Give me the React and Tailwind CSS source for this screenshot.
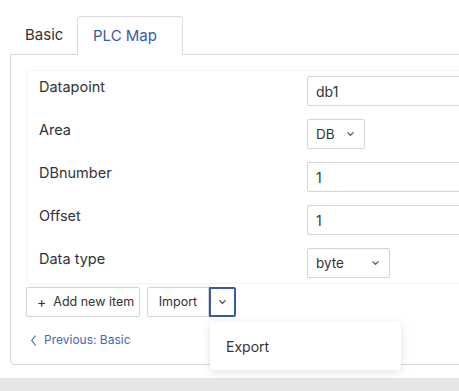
import React from "react";

const font = { fontFamily: "Inter, 'Noto Sans', sans-serif" };

const Chevron = ({ className = "" }) => (
  <svg viewBox="0 0 10 6" className={className} fill="none" stroke="currentColor" strokeWidth="1.4" strokeLinecap="round" strokeLinejoin="round">
    <path d="M2 1.5 L5 4.5 L8 1.5" />
  </svg>
);

const ChevronLeft = ({ className = "" }) => (
  <svg viewBox="0 0 7 12" className={className} fill="none" stroke="currentColor" strokeWidth="1.2" strokeLinecap="round" strokeLinejoin="round">
    <path d="M5.5 1 L1.5 6 L5.5 11" />
  </svg>
);

const rows = [
  { label: "Datapoint", kind: "input", value: "db1" },
  { label: "Area", kind: "select", value: "DB", w: "w-[58px]" },
  { label: "DBnumber", kind: "input", value: "1" },
  { label: "Offset", kind: "input", value: "1" },
  { label: "Data type", kind: "select", value: "byte", w: "w-[83px]" },
];

const App = () => {
  return (
    <div className="relative w-[459px] h-[391px] overflow-hidden bg-white text-[#333]" style={font}>
      {/* tabs */}
      <div className="flex items-end h-[54px] pl-[10px]">
        <div className="w-[67px] h-[38px] pl-[15px] flex items-center text-[15px] text-[#333]">Basic</div>
        <div className="relative z-10 w-[106px] h-[39px] -mb-px pl-[15px] flex items-center border border-b-0 border-[#d9d9d9] rounded-t-[4px] bg-white text-[15px] text-[#3b5aa3]">
          PLC Map
        </div>
      </div>

      {/* panel */}
      <div className="ml-[10px] w-[700px] h-[311px] border border-[#d9d9d9] rounded-b-[4px] pt-[15px] pl-[15px]">
        <div className="border border-[#f4f4f4] rounded-[3px] h-[214px]">
          {rows.map((r) => (
            <div key={r.label} className="flex h-[43px] pt-[5px] pl-[12px]">
              <div className="w-[268px] shrink-0 leading-[22px] text-[14.5px] text-[#333]">{r.label}</div>
              {r.kind === "input" ? (
                <div className="w-[300px] shrink-0 h-[30px] border border-[#d4d4d4] rounded-[2px] flex items-center pl-[8px] text-[14px] text-[#333]">
                  {r.value}
                </div>
              ) : (
                <div className={`${r.w} shrink-0 h-[30px] border border-[#d4d4d4] rounded-[2px] flex items-center justify-between pl-[8px] pr-[9px] text-[13.5px] text-[#333]`}>
                  <span>{r.value}</span>
                  <Chevron className="w-[9px] h-[6px] text-[#555]" />
                </div>
              )}
            </div>
          ))}
        </div>

        {/* actions */}
        <div className="flex mt-[3px] h-[30px]">
          <div className="w-[114px] shrink-0 whitespace-nowrap border border-[#d4d4d4] rounded-[2px] flex items-center pl-[10px] text-[12.5px] text-[#333]">
            <span className="mr-[7px] text-[14px] leading-none">+</span>Add new item
          </div>
          <div className="ml-[7px] w-[62px] shrink-0 border border-[#d4d4d4] rounded-l-[2px] flex items-center justify-center text-[12.5px] text-[#333]">
            Import
          </div>
          <div className="w-[27px] shrink-0 border-2 border-[#3b5aa3] rounded-r-[2px] flex items-center justify-center">
            <Chevron className="w-[9px] h-[6px] text-[#444]" />
          </div>
        </div>

        <div className="mt-[14px] flex items-center pl-[4px] text-[12px] text-[#4a66ad]">
          <ChevronLeft className="w-[7px] h-[11px] mr-[7px]" />
          Previous: Basic
        </div>
      </div>

      {/* dropdown menu */}
      <div className="absolute left-[210px] top-[322px] w-[191px] h-[48px] bg-white rounded-[4px] shadow-[0_2px_10px_rgba(0,0,0,0.12)] flex items-center pl-[16px] text-[14px] text-[#333] z-20">
        Export
      </div>

      {/* bottom band */}
      <div className="absolute left-0 right-0 top-[378px] h-[13px] bg-[#e6e6e6]" />
    </div>
  );
};

export default App;
